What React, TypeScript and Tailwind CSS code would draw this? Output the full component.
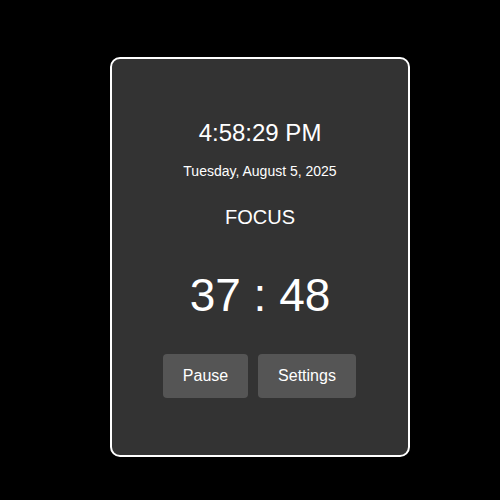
export default function App() {
  return (
    <div className="w-[500px] h-[500px] bg-black flex items-start justify-center pt-[57px] pl-[20px]" style={{ fontFamily: '"Liberation Sans", Arial, sans-serif' }}>
      <div className="w-[300px] h-[400px] bg-[#333333] border-2 border-white rounded-[10px] flex flex-col items-center text-white pt-[60px]">
        <div className="text-[24px] leading-[28px]">4:58:29 PM</div>
        <div className="text-[14px] leading-[16px] mt-[16px]">Tuesday, August 5, 2025</div>
        <div className="text-[20px] leading-[24px] mt-[26px]">FOCUS</div>
        <div className="text-[46px] leading-[56px] mt-[38px]">37 : 48</div>
        <div className="flex gap-[10px] mt-[31px] mr-[1px]">
          <button className="w-[85px] h-[44px] bg-[#555555] rounded-[4px] text-[16px] text-white">Pause</button>
          <button className="w-[98px] h-[44px] bg-[#555555] rounded-[4px] text-[16px] text-white">Settings</button>
        </div>
      </div>
    </div>
  );
}
